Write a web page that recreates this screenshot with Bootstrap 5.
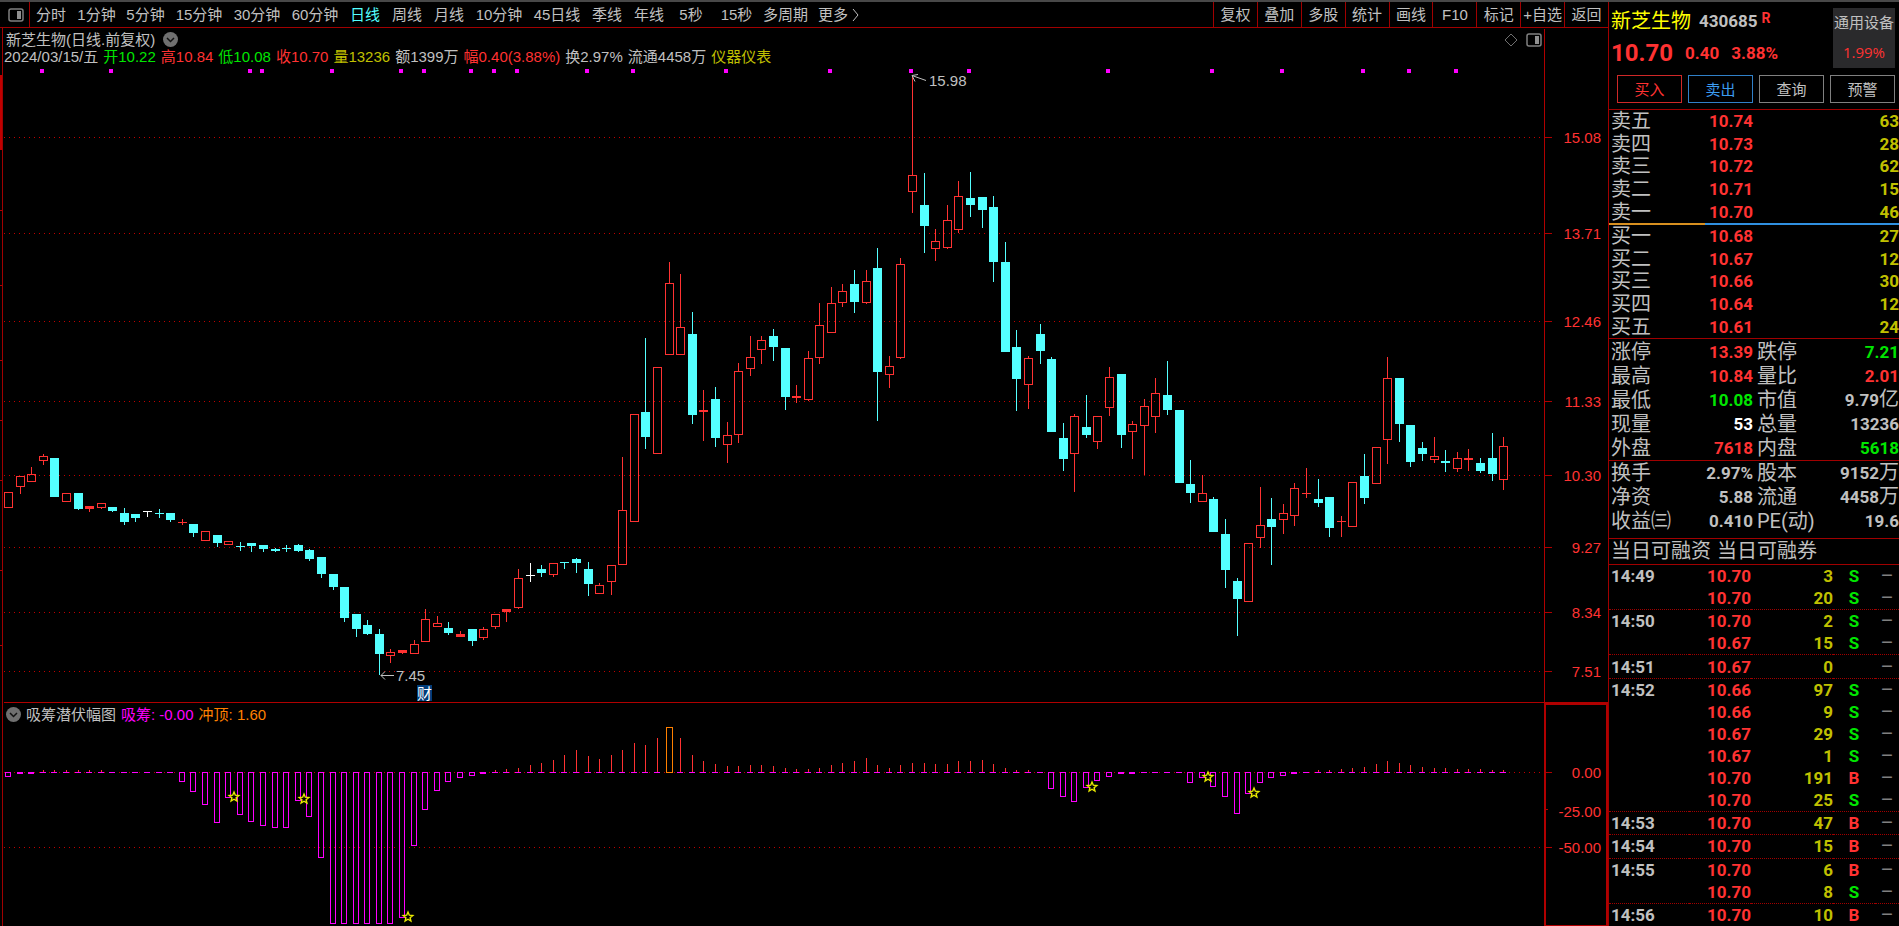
<!DOCTYPE html>
<html lang="zh-CN">
<head>
<meta charset="utf-8">
<meta name="viewport" content="width=device-width, initial-scale=1">
<title>新芝生物 430685</title>
<link href="https://cdn.jsdelivr.net/npm/bootstrap@5.3.0/dist/css/bootstrap.min.css" rel="stylesheet">
<style>
:root{--line:#a00000;--up:#ff3232;--down:#54ffff;--gray:#c0c0c0;--gold:#c0c000;--green:#00e600}
body{background:#000;color:var(--gray);font:15px/18px "Liberation Sans","Noto Sans CJK SC",sans-serif;border-top:2px solid #484848}
button{background:none;border:0;color:inherit;padding:0;font:inherit;white-space:nowrap}
.toolbar{height:26px;border-bottom:1px solid var(--line)}
.pane-toggle{width:28px;border-right:1px solid var(--line)}
.p2{width:42px}.p3{width:49px}.p4{width:58px}
.tools{width:395px}
.tools button{flex:1 1 0;border-left:1px solid var(--line)}
.scrollmark{width:2px}
.panel{min-height:0}
.main-panel{flex:675 1 0}
.sub-panel{flex:223 1 0}
.chart{width:100%;height:100%;left:0;top:0;display:block}
.chart text{font:15px "Liberation Sans",sans-serif}
.charts{border-left:1px solid var(--line)}
.quote{width:291px;border-left:1px solid var(--line);font:700 17px/22px Roboto,"Noto Sans CJK SC",sans-serif}
.up{color:var(--up)}.dn{color:var(--green)}.gold{color:var(--gold)}.mag{color:#f0f}.org{color:#ff8000}.cy{color:var(--down)}
.legend-row{gap:5px;height:17px;line-height:17px;padding-left:1px;white-space:nowrap}
.title-row{height:20px;padding-left:3px;padding-top:3px;line-height:17px;padding-right:66px}
.sub-title{gap:5px}
.head{height:107px;padding:6px 4px 0 2px}
.stock-name{font-size:20px;font-weight:400;color:#ff0}
.ident{line-height:26px}
.rflag{font-size:14px;line-height:20px}
.last-price{font-size:24px;font-weight:700;line-height:30px}
.sector{width:62px;height:60px;background:#2a2a2c;font:15px/30px "Liberation Sans","Noto Sans CJK SC",sans-serif;white-space:nowrap}
.sector .up{font-family:"Open Sans";line-height:28px}
.trade{gap:6px;margin:7px 0 0 6px}
.trade button{flex:1 1 0;height:28px;border:1px solid #808080;font:15px/22px "Noto Sans CJK SC",sans-serif}
.trade .buy{border-color:#d02828;color:var(--up)}
.trade .sell{border-color:#3080c8;color:#3c9cf0}
.sec{border-top:1px solid var(--line)}
table{width:100%;table-layout:fixed;border-collapse:collapse}
td,th{padding:0;white-space:nowrap;overflow:visible}
th{font-size:20px;font-weight:400;padding-left:2px}
td{text-align:right}
.book{height:113px}
.mid{height:2px;background:linear-gradient(90deg,#d89020 33%,#3090e0 33%)}
.stats{line-height:24px}
.stats tr{height:24px}
.limits{padding-top:1px}
.basics{padding-bottom:5px}
.c-l{width:80px}.c-p{width:64px}.c-m{width:62px}
.nb{font-size:20px;font-weight:400;line-height:20px}
.w{color:#fff}
.fin{height:26px;font-size:20px;font-weight:400;line-height:24px;padding-left:2px;gap:6px}
.ticks{height:100%}
.ticks tr.g td{border-top:1px dotted #a00000}
.ticks td:first-child{text-align:left;padding-left:2px}
.ticks td:nth-child(4){text-align:center}
.ticks td:nth-child(5){text-align:center;color:#808080;font-size:20px;font-weight:400;line-height:20px}
</style>
</head>
<body class="vh-100 overflow-hidden d-flex">
<main class="d-flex flex-column flex-grow-1" style="min-width:0">
  <nav class="toolbar d-flex justify-content-between" aria-label="周期">
    <div class="d-flex">
      <div class="scrollmark"></div>
      <button class="pane-toggle d-flex align-items-center justify-content-center border-start-0" aria-label="侧栏"><svg width="16" height="16" viewBox="0 0 16 16"><rect x="1" y="2" width="14" height="12" rx="2" fill="none" stroke="#808080" stroke-width="1.5"/><rect x="9" y="4" width="4" height="8" fill="#909090"/></svg></button>
      <button class="p2">分时</button><button class="p3">1分钟</button><button class="p3">5分钟</button><button class="p4">15分钟</button><button class="p4">30分钟</button><button class="p4">60分钟</button><button class="p2 cy">日线</button><button class="p2">周线</button><button class="p2">月线</button><button class="p4">10分钟</button><button class="p4">45日线</button><button class="p2">季线</button><button class="p2">年线</button><button class="p2">5秒</button><button class="p3">15秒</button><button class="p3">多周期</button>
      <button class="p4 d-flex align-items-center justify-content-center gap-1">更多<svg width="8" height="14" viewBox="0 0 8 14"><path d="M1 1l5 6-5 6" fill="none" stroke="#c0c0c0"/></svg></button>
    </div>
    <div class="tools d-flex"><button>复权</button><button>叠加</button><button>多股</button><button>统计</button><button>画线</button><button>F10</button><button>标记</button><button>+自选</button><button>返回</button></div>
  </nav>
  <div class="d-flex flex-grow-1" style="min-height:0">
    <svg class="scrollmark h-100" id="strip" aria-hidden="true"></svg>
    <div class="charts d-flex flex-column flex-grow-1" style="min-width:0">
      <section class="panel main-panel position-relative">
        <svg class="chart position-absolute" id="kline" role="img" aria-label="日线"></svg>
        <div class="title-row position-relative d-flex align-items-center">
          <span>新芝生物(日线.前复权)</span>
          <button class="ms-2 d-flex" aria-label="菜单"><svg width="15" height="15" viewBox="0 0 15 15"><circle cx="7.500" cy="7.500" r="7.500" fill="#707070"/><path d="M4 6l3.500 3.500L11 6" fill="none" stroke="#111" stroke-width="1.500"/></svg></button>
          <span class="ms-auto d-flex align-items-center gap-2"><svg width="14" height="14" viewBox="0 0 14 14"><path d="M7 1l6 6-6 6-6-6z" fill="none" stroke="#707070"/></svg><svg width="16" height="14" viewBox="0 0 16 14"><rect x="1" y="1" width="14" height="12" rx="2" fill="none" stroke="#808080" stroke-width="1.500"/><rect x="9" y="3" width="4" height="8" fill="#909090"/></svg></span>
        </div>
        <div class="legend-row position-relative d-flex"><span>2024/03/15/五</span><span class="dn">开10.22</span><span class="up">高10.84</span><span class="dn">低10.08</span><span class="up">收10.70</span><span class="gold">量13236</span><span>额1399万</span><span class="up">幅0.40(3.88%)</span><span>换2.97%</span><span>流通4458万</span><span class="gold">仪器仪表</span></div>
      </section>
      <section class="panel sub-panel position-relative">
        <svg class="chart position-absolute" id="bars" role="img" aria-label="吸筹潜伏幅图"></svg>
        <div class="title-row sub-title position-relative d-flex align-items-center pe-0">
          <button class="d-flex" aria-label="指标菜单"><svg width="15" height="15" viewBox="0 0 15 15"><circle cx="7.500" cy="7.500" r="7.500" fill="#707070"/><path d="M4 6l3.500 3.500L11 6" fill="none" stroke="#111" stroke-width="1.500"/></svg></button>
          <span>吸筹潜伏幅图</span><span class="mag">吸筹: -0.00</span><span class="org">冲顶: 1.60</span>
        </div>
      </section>
    </div>
  </div>
</main>
<aside class="quote flex-shrink-0 d-flex flex-column">
  <header class="head">
    <div class="d-flex justify-content-between">
      <div>
        <div class="ident d-flex"><span class="stock-name">新芝生物</span><span class="ms-2">430685</span><span class="rflag up ms-1">R</span></div>
        <div class="d-flex align-items-center up pt-1 gap-2"><span class="last-price">10.70</span><span class="ps-1">0.40</span><span class="ps-1">3.88%</span></div>
      </div>
      <a href="#" class="sector d-block text-reset text-decoration-none text-center">通用设备<span class="up d-block">1.99%</span></a>
    </div>
    <div class="trade d-flex"><button class="buy">买入</button><button class="sell">卖出</button><button>查询</button><button>预警</button></div>
  </header>
  <section class="sec">
    <table class="book"><colgroup><col class="c-l"><col class="c-p"><col></colgroup>
      <tr><th scope="row">卖五</th><td class="up">10.74</td><td class="gold">63</td></tr>
      <tr><th scope="row">卖四</th><td class="up">10.73</td><td class="gold">28</td></tr>
      <tr><th scope="row">卖三</th><td class="up">10.72</td><td class="gold">62</td></tr>
      <tr><th scope="row">卖二</th><td class="up">10.71</td><td class="gold">15</td></tr>
      <tr><th scope="row">卖一</th><td class="up">10.70</td><td class="gold">46</td></tr>
    </table>
    <div class="mid"></div>
    <table class="book"><colgroup><col class="c-l"><col class="c-p"><col></colgroup>
      <tr><th scope="row">买一</th><td class="up">10.68</td><td class="gold">27</td></tr>
      <tr><th scope="row">买二</th><td class="up">10.67</td><td class="gold">12</td></tr>
      <tr><th scope="row">买三</th><td class="up">10.66</td><td class="gold">30</td></tr>
      <tr><th scope="row">买四</th><td class="up">10.64</td><td class="gold">12</td></tr>
      <tr><th scope="row">买五</th><td class="up">10.61</td><td class="gold">24</td></tr>
    </table>
  </section>
  <section class="sec limits">
    <table class="stats"><colgroup><col class="c-l"><col class="c-p"><col class="c-m"><col></colgroup>
      <tr><th scope="row">涨停</th><td class="up">13.39</td><th class="ps-1">跌停</th><td class="dn">7.21</td></tr>
      <tr><th scope="row">最高</th><td class="up">10.84</td><th class="ps-1">量比</th><td class="up">2.01</td></tr>
      <tr><th scope="row">最低</th><td class="dn">10.08</td><th class="ps-1">市值</th><td>9.79<span class="nb">亿</span></td></tr>
      <tr><th scope="row">现量</th><td class="w">53</td><th class="ps-1">总量</th><td>13236</td></tr>
      <tr><th scope="row">外盘</th><td class="up">7618</td><th class="ps-1">内盘</th><td class="dn">5618</td></tr>
    </table>
  </section>
  <section class="sec basics">
    <table class="stats"><colgroup><col class="c-l"><col class="c-p"><col class="c-m"><col></colgroup>
      <tr><th scope="row">换手</th><td>2.97%</td><th class="ps-1">股本</th><td>9152<span class="nb">万</span></td></tr>
      <tr><th scope="row">净资</th><td>5.88</td><th class="ps-1">流通</th><td>4458<span class="nb">万</span></td></tr>
      <tr><th scope="row">收益㈢</th><td>0.410</td><th class="ps-1">PE(动)</th><td>19.6</td></tr>
    </table>
  </section>
  <section class="sec fin d-flex"><span>当日可融资</span><span>当日可融券</span></section>
  <section class="sec flex-grow-1">
    <table class="ticks"><colgroup><col class="c-l"><col class="c-m"><col style="width:82px"><col style="width:42px"><col></colgroup>
      <tr><td>14:49</td><td class="up">10.70</td><td class="gold">3</td><td class="dn">S</td><td>–</td></tr>
      <tr><td></td><td class="up">10.70</td><td class="gold">20</td><td class="dn">S</td><td>–</td></tr>
      <tr class="g"><td>14:50</td><td class="up">10.70</td><td class="gold">2</td><td class="dn">S</td><td>–</td></tr>
      <tr><td></td><td class="up">10.67</td><td class="gold">15</td><td class="dn">S</td><td>–</td></tr>
      <tr class="g"><td>14:51</td><td class="up">10.67</td><td class="gold">0</td><td></td><td>–</td></tr>
      <tr class="g"><td>14:52</td><td class="up">10.66</td><td class="gold">97</td><td class="dn">S</td><td>–</td></tr>
      <tr><td></td><td class="up">10.66</td><td class="gold">9</td><td class="dn">S</td><td>–</td></tr>
      <tr><td></td><td class="up">10.67</td><td class="gold">29</td><td class="dn">S</td><td>–</td></tr>
      <tr><td></td><td class="up">10.67</td><td class="gold">1</td><td class="dn">S</td><td>–</td></tr>
      <tr><td></td><td class="up">10.70</td><td class="gold">191</td><td class="up">B</td><td>–</td></tr>
      <tr><td></td><td class="up">10.70</td><td class="gold">25</td><td class="dn">S</td><td>–</td></tr>
      <tr class="g"><td>14:53</td><td class="up">10.70</td><td class="gold">47</td><td class="up">B</td><td>–</td></tr>
      <tr class="g"><td>14:54</td><td class="up">10.70</td><td class="gold">15</td><td class="up">B</td><td>–</td></tr>
      <tr class="g"><td>14:55</td><td class="up">10.70</td><td class="gold">6</td><td class="up">B</td><td>–</td></tr>
      <tr><td></td><td class="up">10.70</td><td class="gold">8</td><td class="dn">S</td><td>–</td></tr>
      <tr class="g"><td>14:56</td><td class="up">10.70</td><td class="gold">10</td><td class="up">B</td><td>–</td></tr>
    </table>
  </section>
</aside>
<script src="https://cdn.jsdelivr.net/npm/bootstrap@5.3.0/dist/js/bootstrap.bundle.min.js"></script>
<script>
// One candle per entry: colour, high, body top, body bottom, low (chart units, downwards).
const K = `R 492 492 508 508|R 476 476 487 494|R 467 474 482 482|R 454 456 461 465|C 458 458 497 497|R 493 493 502 502|C 493 493 509 510|R 506 506 509 512|R 503 503 508 509|C 507 507 511 512|C 508 513 522 525|C 514 514 518 522|W 511 511 512 517|C 509 513 514 518|C 513 513 520 522|R 519 522 523 525|C 524 524 533 537|R 531 531 541 541|C 535 535 543 547|R 541 541 545 545|C 542 546 547 551|C 543 543 546 552|C 545 545 549 552|C 548 549 551 552|C 545 548 549 552|C 544 545 551 552|C 549 550 559 561|C 557 557 574 578|C 574 574 587 590|C 587 587 618 622|C 614 614 629 637|C 620 625 634 635|C 629 634 654 675|R 649 652 656 663|R 650 650 653 654|R 640 644 654 654|R 609 619 642 642|R 616 623 627 627|C 622 628 633 635|R 631 634 637 637|C 629 629 641 646|R 627 629 638 640|R 614 614 627 629|R 609 609 612 622|R 569 578 608 609|W 563 575 576 582|C 565 569 573 577|R 563 563 575 577|C 562 562 563 569|C 558 559 563 573|C 562 569 584 596|R 583 585 594 594|R 565 565 582 595|R 457 510 565 565|R 414 414 522 522|C 338 412 437 449|R 367 367 454 454|R 262 283 355 355|R 274 327 355 355|C 312 334 415 424|R 390 410 412 441|C 387 399 438 447|R 422 435 445 463|R 363 371 435 443|R 336 357 369 376|R 336 340 350 364|C 329 336 347 361|C 348 348 397 410|R 385 396 398 403|R 351 358 400 401|R 303 325 358 364|R 287 303 333 333|R 284 291 303 307|C 270 284 302 313|R 270 281 303 304|C 248 268 372 421|R 356 366 375 388|R 258 264 358 359|R 75 175 192 213|C 173 205 226 253|R 229 241 249 261|R 205 220 248 249|R 181 196 230 233|C 172 198 205 217|C 197 197 210 228|C 196 207 262 282|C 242 262 352 352|C 330 347 379 411|R 356 358 385 409|C 324 334 351 364|C 357 359 432 432|C 423 438 459 471|R 414 416 454 492|C 395 427 435 438|R 416 416 442 449|R 367 377 408 416|C 374 374 435 448|R 421 424 432 459|R 399 406 426 475|R 378 393 417 433|C 361 395 410 415|C 410 410 483 483|C 460 484 493 503|R 475 493 502 502|C 497 499 532 532|C 519 534 570 588|C 578 581 599 636|R 543 543 602 602|R 487 525 538 548|C 498 519 527 565|R 504 513 520 534|R 483 488 516 526|R 468 493 494 498|C 479 499 503 507|C 497 497 528 537|R 516 521 522 537|R 482 482 527 527|C 454 476 498 504|R 447 447 484 484|R 357 378 440 464|C 378 378 424 442|C 425 425 462 467|C 442 448 454 461|R 437 456 460 463|C 450 461 463 472|R 452 458 469 472|R 449 458 460 471|C 458 463 471 473|C 433 458 474 481|R 437 446 480 490`.split('|').map(s => s.split(' '));
// Indicator: negative values hang below the zero line.
const B = [-4,-2,-2,2,2,2,2,2,2,0,0,0,0,0,0,-9,-19,-32,-50,-25,-42,-49,-53,-55,-55,-28,-44,-85,-151,-151,-151,-151,-151,-151,-145,-73,-37,-18,-9,-5,-3,-2,2,3,4,7,9,12,17,22,16,13,17,22,29,27,34,45,34,17,11,8,6,6,7,7,6,4,3,3,4,7,9,11,14,7,4,7,9,9,8,8,11,11,12,8,4,2,2,0,-16,-24,-29,-15,-8,-4,-2,-2,0,0,0,0,-10,-5,-14,-24,-41,-21,-10,-5,-3,-2,0,2,2,3,4,5,8,11,9,7,5,4,4,3,3,3,2,2];
const DOTS = [3,9,21,22,28,34,36,40,42,44,50,54,62,71,78,83,95,104,110,117,121,125];
const STARS = [[234,797],[304,799],[408,917],[1092,787],[1208,777],[1254,793]];
const GRID = [[137,'15.08'],[233,'13.71'],[321,'12.46'],[401,'11.33'],[475,'10.30'],[547,'9.27'],[612,'8.34'],[671,'7.51']];
const COL = {R:'#ff3232', C:'#54ffff', W:'#ffffff'}, LINE = '#b00000';
const line = (x1,y1,x2,y2,c,e='') => `<line x1="${x1+.5}" y1="${y1+.5}" x2="${x2+.5}" y2="${y2+.5}" stroke="${c}" ${e}/>`;
const fill = (x,y,w,h,c) => `<rect x="${x}" y="${y}" width="${w}" height="${h}" fill="${c}"/>`;
const box = (x,y,w,h,c) => `<rect x="${x+.5}" y="${y+.5}" width="${w-1}" height="${Math.max(h-1,1)}" fill="none" stroke="${c}"/>`;
const text = (x,y,s,c,e='') => `<text x="${x}" y="${y}" fill="${c}" ${e}>${s}</text>`;
const crisp = s => `<g shape-rendering="crispEdges">${s}</g>`;
const size = id => { const e = document.getElementById(id), r = e.parentNode.getBoundingClientRect(); return [e, Math.round(r.width), Math.round(r.height)]; };

function kline(){
  const [el,w,h] = size('kline'), sx = w/1605, sy = h/675;
  const X = p => Math.round((p-3)*sx), Y = p => Math.round((p-28)*sy), cx = i => X(8+11.59*i), ax = w-64;
  let s = '', t = '';
  GRID.forEach(([y,l]) => { s += line(0,Y(y),ax,Y(y),'#c00000','stroke-dasharray="1 4"') + line(ax,Y(y),ax+7,Y(y),LINE); t += text(w-7,Y(y)+6,l,COL.R,'text-anchor="end"'); });
  s += line(ax,0,ax,h,LINE) + line(0,h-1,w,h-1,LINE);
  K.forEach((k,i) => {
    const c = COL[k[0]], x = cx(i), [hi,a,b,lo] = k.slice(1).map(v => Y(+v)), bh = b-a;
    if (hi < a) s += fill(x,hi,1,a-hi,c);
    if (lo > b) s += fill(x,b,1,lo-b,c);
    s += k[0]==='R' && bh > 3 ? box(x-4,a,9,bh,c) : fill(x-4,a,9,Math.max(bh,1),c);
  });
  DOTS.forEach(i => s += fill(cx(i)-3,Y(69),4,4,'#ff00ff'));
  const hx = cx(78), hy = Y(75), lx = cx(32), ly = Y(675);
  t += `<path d="M${hx} ${hy}l14 5M${hx} ${hy}l6-1M${hx} ${hy}l3 6M${lx+2} ${ly}h13M${lx+6} ${ly-4}l-4 4 4 4" transform="translate(0 .5)" fill="none" stroke="#c0c0c0"/>`;
  t += text(hx+17,hy+11,'15.98','#c0c0c0') + text(lx+17,ly+6,'7.45','#c0c0c0');
  const fx = X(417), fy = Y(685);
  t += fill(fx,fy,15,16,'#003c78') + text(fx,fy+14,'财','#fff','style="font-family:\'Noto Sans CJK SC\',sans-serif"');
  el.innerHTML = crisp(s) + t;
}
function bars(){
  const [el,w,h] = size('bars'), sx = w/1605, sy = h/223;
  const X = p => Math.round((p-3)*sx), Y = p => Math.round((p-703)*sy), cx = i => X(8+11.59*i), ax = w-64, z = Y(772);
  let s = '', t = '';
  [[772,772,'0.00'],[809,811,'-25.00'],[847,847,'-50.00']].forEach(([y,ty,l]) => {
    if (y !== 809) s += line(0,Y(y),ax,Y(y),'#c00000','stroke-dasharray="1 4"');
    s += line(ax,Y(y),ax+(y===809?3:7),Y(y),LINE); t += text(w-7,Y(ty)+6,l,COL.R,'text-anchor="end"');
  });
  s += `<rect x="${ax+1}" y="1" width="${w-ax-2}" height="${h-1}" fill="none" stroke="${LINE}" stroke-width="2"/>`;
  B.forEach((v,i) => {
    const x = cx(i), n = Math.round(Math.abs(v)*sy);
    if (i === 57) s += box(x-3,z-n,7,n+1,'#ff8000');
    else if (v < -2) s += box(x-3,z,6,n+1,'#ff00ff');
    else s += (v > 0 ? fill(x,z-n,1,n,COL.R) : '') + fill(x-3,z,6,v<0?2:1,'#ff00ff');
  });
  STARS.forEach(([px,py]) => {
    let p = '';
    for (let k=0;k<10;k++){ const r = k%2 ? 2.2 : 5, a = Math.PI*(k/5-.5); p += `${(X(px)+r*Math.cos(a)).toFixed(1)},${(Y(py)+r*Math.sin(a)).toFixed(1)} `; }
    t += `<polygon points="${p}" fill="#000" stroke="#e8e800" stroke-width="1.400"/>`;
  });
  el.innerHTML = crisp(s) + t;
}
function strip(){
  const [el,,h] = size('strip'), q = h/898;
  el.innerHTML = crisp(fill(0,47*q,2,75*q,'#c00000') + [182,257,332,392,452,542,617].map(y => fill(0,Math.round(y*q),2,1,LINE)).join(''));
}
function draw(){ kline(); bars(); strip(); }
draw();
addEventListener('resize', draw);
</script>
</body>
</html>
